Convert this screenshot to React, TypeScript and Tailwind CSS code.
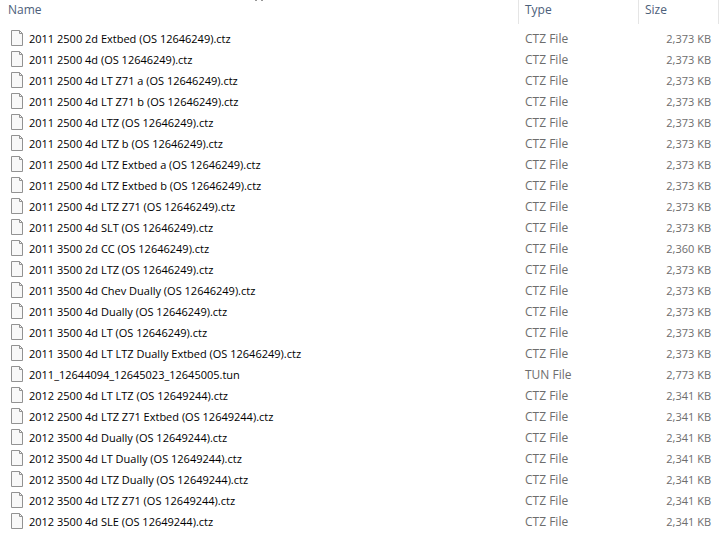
interface FileEntry {
  name: string;
  type: string;
  size: string;
}

const ctz = (name: string, size: string): FileEntry => ({ name: `${name}.ctz`, type: 'CTZ File', size });

const files: FileEntry[] = [
  ctz('2011 2500 2d Extbed (OS 12646249)', '2,373 KB'),
  ctz('2011 2500 4d (OS 12646249)', '2,373 KB'),
  ctz('2011 2500 4d LT Z71 a (OS 12646249)', '2,373 KB'),
  ctz('2011 2500 4d LT Z71 b (OS 12646249)', '2,373 KB'),
  ctz('2011 2500 4d LTZ (OS 12646249)', '2,373 KB'),
  ctz('2011 2500 4d LTZ b (OS 12646249)', '2,373 KB'),
  ctz('2011 2500 4d LTZ Extbed a (OS 12646249)', '2,373 KB'),
  ctz('2011 2500 4d LTZ Extbed b (OS 12646249)', '2,373 KB'),
  ctz('2011 2500 4d LTZ Z71 (OS 12646249)', '2,373 KB'),
  ctz('2011 2500 4d SLT (OS 12646249)', '2,373 KB'),
  ctz('2011 3500 2d CC (OS 12646249)', '2,360 KB'),
  ctz('2011 3500 2d LTZ (OS 12646249)', '2,373 KB'),
  ctz('2011 3500 4d Chev Dually (OS 12646249)', '2,373 KB'),
  ctz('2011 3500 4d Dually (OS 12646249)', '2,373 KB'),
  ctz('2011 3500 4d LT (OS 12646249)', '2,373 KB'),
  ctz('2011 3500 4d LT LTZ Dually Extbed (OS 12646249)', '2,373 KB'),
  { name: '2011_12644094_12645023_12645005.tun', type: 'TUN File', size: '2,773 KB' },
  ctz('2012 2500 4d LT LTZ (OS 12649244)', '2,341 KB'),
  ctz('2012 2500 4d LTZ Z71 Extbed (OS 12649244)', '2,341 KB'),
  ctz('2012 3500 4d Dually (OS 12649244)', '2,341 KB'),
  ctz('2012 3500 4d LT Dually (OS 12649244)', '2,341 KB'),
  ctz('2012 3500 4d LTZ Dually (OS 12649244)', '2,341 KB'),
  ctz('2012 3500 4d LTZ Z71 (OS 12649244)', '2,341 KB'),
  ctz('2012 3500 4d SLE (OS 12649244)', '2,341 KB'),
];

function FileIcon() {
  return (
    <svg width="12" height="16" viewBox="0 0 12 16" className="shrink-0" aria-hidden="true">
      <path d="M0.5 0.5H8.5L11.5 3.5V15.5H0.5Z" fill="#f8f8f8" stroke="#929292" />
      <path d="M8.5 0.5V3.5H11.5" fill="none" stroke="#929292" />
    </svg>
  );
}

// Ascending sort marker, only its feet show under the top edge
function SortMarker() {
  return (
    <svg width="8" height="2" viewBox="0 0 8 2" className="absolute top-0 left-1/2 -translate-x-1/2" aria-hidden="true">
      <path d="M0.5 1L2 -0.5M7.5 1L6 -0.5" fill="none" stroke="#333333" />
    </svg>
  );
}

export default function App() {
  return (
    <main className="min-h-screen bg-white pr-1 font-['Open_Sans',sans-serif] text-[12px]">
      <table className="w-full table-fixed border-separate border-spacing-0 text-left whitespace-nowrap">
        <thead>
          <tr className="text-[#4c607a]">
            <th scope="col" className="relative h-6 p-0 pb-1 pl-2 font-normal">
              Name
              <SortMarker />
            </th>
            <th scope="col" className="h-6 w-[120px] border-l border-[#e5e5e5] p-0 pb-1 pl-1.5 font-normal">
              Type
            </th>
            <th scope="col" className="h-6 w-[81px] border-x border-[#e5e5e5] p-0 pb-1 pl-1.5 font-normal">
              Size
            </th>
          </tr>
        </thead>
        <tbody className="text-[#6d6d6d] before:block before:h-1">
          {files.map((file) => (
            <tr key={file.name}>
              <td className="h-[21px] p-0 pl-[11px] text-[11px] text-black">
                <div className="flex h-[21px] items-start gap-1.5 pt-0.5">
                  <FileIcon />
                  <span className="leading-[18px]">{file.name}</span>
                </div>
              </td>
              <td className="h-[21px] p-0 pl-[7px]">{file.type}</td>
              <td className="h-[21px] p-0 pt-px pr-2 text-right text-[11px]">{file.size}</td>
            </tr>
          ))}
        </tbody>
      </table>
    </main>
  );
}
